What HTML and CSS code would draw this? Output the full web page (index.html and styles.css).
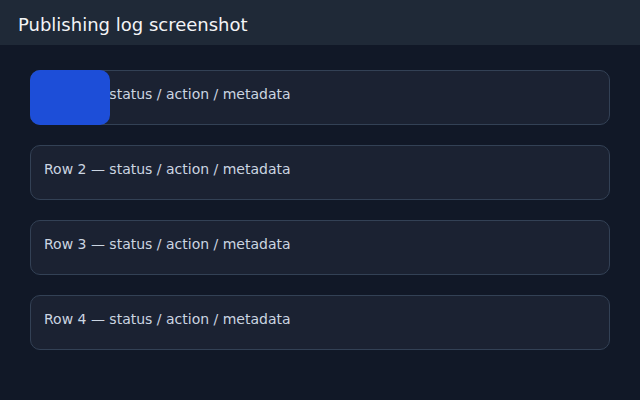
FILE: index.html
```html
<!DOCTYPE html>
<html>
<head>
<meta charset="utf-8">
<link rel="stylesheet" href="styles.css">
</head>
<body>
<header class="topbar">Publishing log screenshot</header>
<main class="log">
  <div class="row">Row 1 — status / action / metadata<div class="badge"></div></div>
  <div class="row">Row 2 — status / action / metadata</div>
  <div class="row">Row 3 — status / action / metadata</div>
  <div class="row">Row 4 — status / action / metadata</div>
</main>
</body>
</html>
```
FILE: styles.css
```css
html, body {
  margin: 0;
  padding: 0;
  background: #111827;
  font-family: "DejaVu Sans", sans-serif;
  width: 640px;
  height: 400px;
  overflow: hidden;
}
.topbar {
  height: 45px;
  box-sizing: border-box;
  background: #1f2937;
  color: #f3f4f6;
  font-size: 18px;
  display: flex;
  align-items: center;
  padding: 3px 18px 0;
}
.log {
  padding: 25px 30px;
  display: flex;
  flex-direction: column;
  gap: 20px;
}
.row {
  position: relative;
  height: 55px;
  box-sizing: border-box;
  border: 1px solid #334155;
  border-radius: 10px;
  background: #1b2232;
  color: #cbd5e1;
  font-size: 14px;
  line-height: 17px;
  padding: 15px 13px;
}
.badge {
  position: absolute;
  left: -1px;
  top: -1px;
  width: 80px;
  height: 55px;
  border-radius: 10px;
  background: #1d4ed8;
}
```
